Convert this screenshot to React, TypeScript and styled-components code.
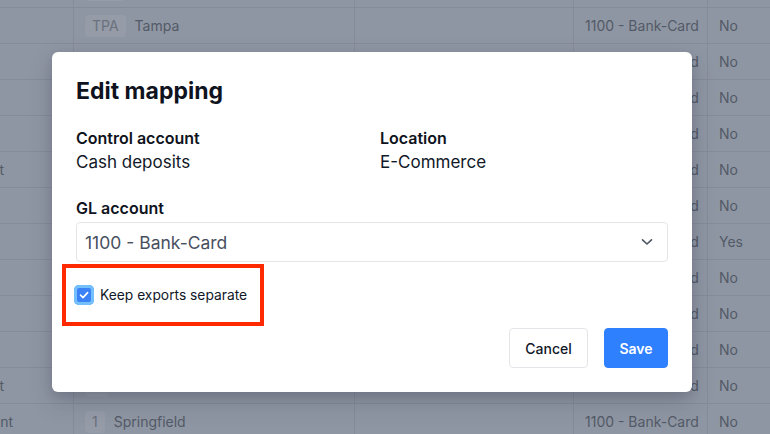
import React from "react";
import styled, { createGlobalStyle } from "styled-components";

const Global = createGlobalStyle`
  html, body { margin: 0; padding: 0; }
  body { font-family: Inter, "Noto Sans", "Liberation Sans", sans-serif; background: #8f96a3; overflow: hidden; }
  * { box-sizing: border-box; }
`;

const Page = styled.div`
  position: relative;
  width: 770px;
  height: 434px;
  overflow: hidden;
  background: #8f96a3;
`;

const TableWrap = styled.div`
  margin-top: -28px;
  margin-left: -120px;
`;

const Row = styled.div`
  display: grid;
  grid-template-columns: 194px 281px 219px 134px 80px;
  height: 36px;
  border-bottom: 1px solid #858c98;
`;

const Cell = styled.div<{ $endPad?: number }>`
  display: flex;
  align-items: center;
  justify-content: ${(p) => (p.$endPad !== undefined ? "flex-end" : "flex-start")};
  gap: 9px;
  padding: 0 ${(p) => (p.$endPad !== undefined ? `${p.$endPad}px` : "11px")} 0 11px;
  font-size: 14px;
  color: #535a67;
  white-space: nowrap;
  overflow: hidden;
  border-right: 1px solid #858c98;
`;

const Badge = styled.span`
  display: inline-flex;
  align-items: center;
  justify-content: center;
  height: 22px;
  padding: 0 7px;
  border-radius: 4px;
  background: #959ba7;
  color: #6a717d;
  font-size: 14px;
`;

const Backdrop = styled.div`
  position: absolute;
  inset: 0;
  display: flex;
  align-items: flex-start;
  justify-content: flex-start;
  padding: 52px 0 0 52px;
`;

const Modal = styled.div`
  width: 640px;
  height: 340px;
  background: #ffffff;
  border-radius: 6px;
  box-shadow: 0 10px 25px rgba(15, 23, 42, 0.18), 0 4px 10px rgba(15, 23, 42, 0.1);
  padding: 24px;
  display: flex;
  flex-direction: column;
  position: relative;
`;

const Title = styled.h2`
  margin: 0;
  font-size: 23px;
  line-height: 30px;
  font-weight: 700;
  color: #0f1320;
`;

const InfoGrid = styled.div`
  display: grid;
  grid-template-columns: 1fr 1fr;
  column-gap: 16px;
  margin-top: 20px;
`;

const Field = styled.div`
  display: flex;
  flex-direction: column;
`;

const Label = styled.div`
  font-size: 16px;
  line-height: 24px;
  font-weight: 600;
  color: #0f1320;
`;

const Value = styled.div`
  font-size: 17px;
  line-height: 24px;
  color: #111827;
`;

const GLField = styled.div`
  margin-top: 22px;
  display: flex;
  flex-direction: column;
  gap: 2px;
`;

const Select = styled.div`
  height: 40px;
  border: 1px solid #e3e5e9;
  border-radius: 4px;
  display: flex;
  align-items: center;
  justify-content: space-between;
  padding: 0 14px 0 8px;
  font-size: 17.5px;
  color: #475060;
`;

const CheckRow = styled.label`
  margin-top: 23px;
  margin-left: -2px;
  display: flex;
  align-items: center;
  gap: 6px;
  font-size: 13.8px;
  color: #111827;
`;

const CheckBox = styled.span`
  width: 20px;
  height: 20px;
  border-radius: 5px;
  background: #3b82f6;
  box-shadow: inset 0 0 0 3px #74c0fc;
  display: inline-flex;
  align-items: center;
  justify-content: center;
`;

const Footer = styled.div`
  margin-top: auto;
  display: flex;
  justify-content: flex-end;
  gap: 16px;
`;

const Button = styled.button<{ $primary?: boolean }>`
  height: 40px;
  padding: 0;
  border-radius: 4px;
  font-family: inherit;
  font-size: 14px;
  font-weight: ${(p) => (p.$primary ? 600 : 500)};
  border: 1px solid ${(p) => (p.$primary ? "#2f80ff" : "#e3e5e9")};
  background: ${(p) => (p.$primary ? "#2f80ff" : "#ffffff")};
  color: ${(p) => (p.$primary ? "#ffffff" : "#111827")};
  width: ${(p) => (p.$primary ? "64px" : "79px")};
`;

const Highlight = styled.div`
  position: absolute;
  left: 62px;
  top: 264px;
  width: 202px;
  height: 62px;
  border: 4.5px solid #ff2a00;
  pointer-events: none;
`;

type R = { a?: string; end?: number; code?: string; city?: string; gl?: string; ex: string };
const rows: R[] = [
  { code: "MIA", city: "", gl: "1100 - Bank-Card", ex: "No" },
  { code: "TPA", city: "Tampa", gl: "1100 - Bank-Card", ex: "No" },
  { gl: "1100 - Bank-Card", ex: "No" },
  { gl: "1100 - Bank-Card", ex: "No" },
  { gl: "1100 - Bank-Card", ex: "No" },
  { a: "Cash receipt", end: 69, gl: "1100 - Bank-Card", ex: "No" },
  { gl: "1100 - Bank-Card", ex: "No" },
  { gl: "1100 - Bank-Card", ex: "Yes" },
  { gl: "1100 - Bank-Card", ex: "No" },
  { gl: "1100 - Bank-Card", ex: "No" },
  { gl: "1100 - Bank-Card", ex: "No" },
  { a: "Cash receipt", end: 69, code: "2", city: "Orlando", gl: "1100 - Bank-Card", ex: "No" },
  { a: "Cash adjustment", end: 60, code: "1", city: "Springfield", gl: "1100 - Bank-Card", ex: "No" },
];

const Check = () => (
  <svg width="12" height="12" viewBox="0 0 12 12" fill="none">
    <path d="M2.5 6.2 L5 8.6 L9.6 3.6" stroke="#fff" strokeWidth="1.6" strokeLinecap="round" strokeLinejoin="round" />
  </svg>
);

const Chevron = () => (
  <svg width="12" height="8" viewBox="0 0 12 8" fill="none">
    <path d="M1.5 1.8 L6 6 L10.5 1.8" stroke="#4b5563" strokeWidth="1.6" strokeLinecap="round" strokeLinejoin="round" />
  </svg>
);

export default function App() {
  return (
    <Page>
      <Global />
      <TableWrap>
        {rows.map((r, i) => (
          <Row key={i}>
            <Cell $endPad={r.a ? r.end : undefined}>{r.a}</Cell>
            <Cell>
              {r.code ? <Badge>{r.code}</Badge> : null}
              {r.city}
            </Cell>
            <Cell />
            <Cell>{r.gl}</Cell>
            <Cell>{r.ex}</Cell>
          </Row>
        ))}
      </TableWrap>
      <Backdrop>
        <Modal>
          <Title>Edit mapping</Title>
          <InfoGrid>
            <Field>
              <Label>Control account</Label>
              <Value>Cash deposits</Value>
            </Field>
            <Field>
              <Label>Location</Label>
              <Value>E-Commerce</Value>
            </Field>
          </InfoGrid>
          <GLField>
            <Label>GL account</Label>
            <Select>
              <span>1100 - Bank-Card</span>
              <Chevron />
            </Select>
          </GLField>
          <CheckRow>
            <CheckBox>
              <Check />
            </CheckBox>
            Keep exports separate
          </CheckRow>
          <Footer>
            <Button>Cancel</Button>
            <Button $primary>Save</Button>
          </Footer>
        </Modal>
      </Backdrop>
      <Highlight />
    </Page>
  );
}
